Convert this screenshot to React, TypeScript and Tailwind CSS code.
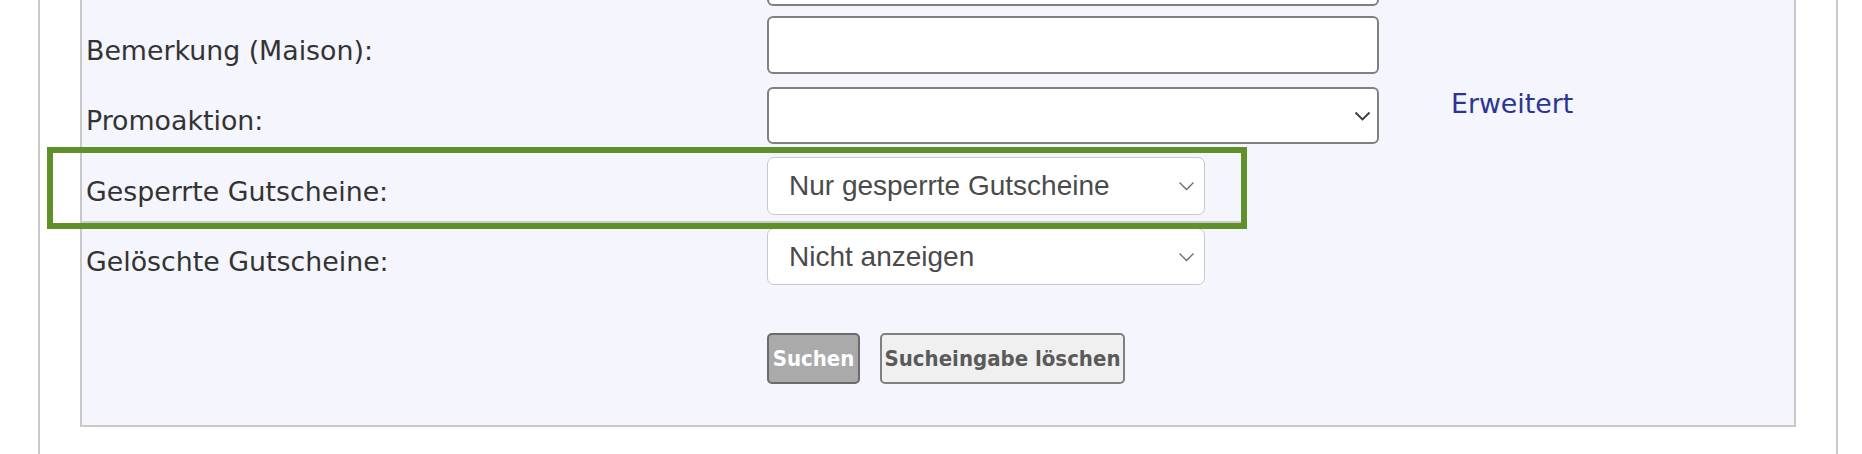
import type { ReactNode } from "react"

const labelFont = { fontFamily: '"DejaVu Sans", Verdana, sans-serif' }
const fieldFont = { fontFamily: '"Liberation Sans", Arial, sans-serif' }
const buttonFont = { fontFamily: '"DejaVu Sans Condensed", "DejaVu Sans", sans-serif', fontStretch: "condensed" as const }

function Chevron({ dark }: { dark?: boolean }) {
  return (
    <svg
      width="17"
      height="10"
      viewBox="0 0 17 10"
      fill="none"
      className="pointer-events-none absolute top-1/2 -translate-y-1/2"
      style={{ right: dark ? 8 : 10 }}
    >
      <polyline
        points="1.5,1.5 8.5,8.5 15.5,1.5"
        stroke={dark ? "#3a3a3a" : "#6a6a6a"}
        strokeWidth={dark ? 1.8 : 1.3}
      />
    </svg>
  )
}

function Row({ label, children, extra, className }: { label: string; children: ReactNode; extra?: ReactNode; className?: string }) {
  return (
    <div className={"flex items-center " + (className ?? "")}>
      <div className="w-[681px] shrink-0 pt-[12px] text-[26.8px] text-[#333]" style={labelFont}>
        {label}
      </div>
      <div className="w-[612px] shrink-0">{children}</div>
      {extra}
    </div>
  )
}

export default function App() {
  return (
    <div className="relative h-[454px] w-full overflow-hidden bg-white">
      <div className="ml-[38px] flex h-full w-[1800px] flex-col border-x-2 border-[#c8c8c8]">
        <div className="ml-[40px] -mt-[52px] w-[1716px] border-x-2 border-b-2 border-[#c8c8c8] bg-[#f4f5fd] pb-[41px] pl-[4px]">
          {/* row cut off at the top */}
          <div className="flex">
            <div className="w-[681px] shrink-0" />
            <input className="h-[58px] w-[612px] rounded-[6px] border-2 border-[#808080] bg-white" />
          </div>

          <Row label="Bemerkung (Maison):" className="mt-[10px]">
            <input className="h-[58px] w-[612px] rounded-[6px] border-2 border-[#808080] bg-white" />
          </Row>

          <Row
            label="Promoaktion:"
            className="mt-[13px]"
            extra={
              <a href="#" className="ml-[72px] -mt-[3px] self-start text-[26.8px] text-[#2b3592]" style={labelFont}>
                Erweitert
              </a>
            }
          >
            <div className="relative h-[57px] w-[612px]">
              <select className="h-full w-full appearance-none rounded-[6px] border-2 border-[#808080] bg-white" />
              <Chevron dark />
            </div>
          </Row>

          <Row label="Gesperrte Gutscheine:" className="mt-[13px]">
            <div className="relative h-[58px] w-[438px]">
              <select
                defaultValue="gesperrt"
                className="h-full w-full appearance-none rounded-[7px] border border-[#c9c9c9] bg-white pl-[21px] text-[28px] text-[#4a4a4a]"
                style={fieldFont}
              >
                <option value="alle">Alle Gutscheine</option>
                <option value="gesperrt">Nur gesperrte Gutscheine</option>
              </select>
              <Chevron />
            </div>
          </Row>

          <Row label="Gelöschte Gutscheine:" className="mt-[13px]">
            <div className="relative h-[57px] w-[438px]">
              <select
                defaultValue="nein"
                className="h-full w-full appearance-none rounded-[7px] border border-[#c9c9c9] bg-white pl-[21px] text-[28px] text-[#4a4a4a]"
                style={fieldFont}
              >
                <option value="nein">Nicht anzeigen</option>
                <option value="ja">Anzeigen</option>
              </select>
              <Chevron />
            </div>
          </Row>

          <div className="mt-[48px] flex gap-[20px] pl-[681px]">
            <button
              className="h-[51px] w-[93px] rounded-[5px] border-2 border-[#6b6b6b] bg-[#aaaaaa] text-[22px] font-bold text-white"
              style={buttonFont}
            >
              Suchen
            </button>
            <button
              className="h-[51px] w-[245px] rounded-[5px] border-2 border-[#808080] bg-[#f0f0f0] text-[22px] font-bold text-[#5a5a5a]"
              style={buttonFont}
            >
              Sucheingabe löschen
            </button>
          </div>
        </div>
      </div>

      {/* green highlight frame */}
      <div className="pointer-events-none absolute left-[47px] top-[147px] h-[82px] w-[1200px] border-[6px] border-[#5f902a]">
        <div className="absolute bottom-0 left-[27px] right-0 h-[2px] bg-[#cdcdcd]" />
      </div>
    </div>
  )
}
